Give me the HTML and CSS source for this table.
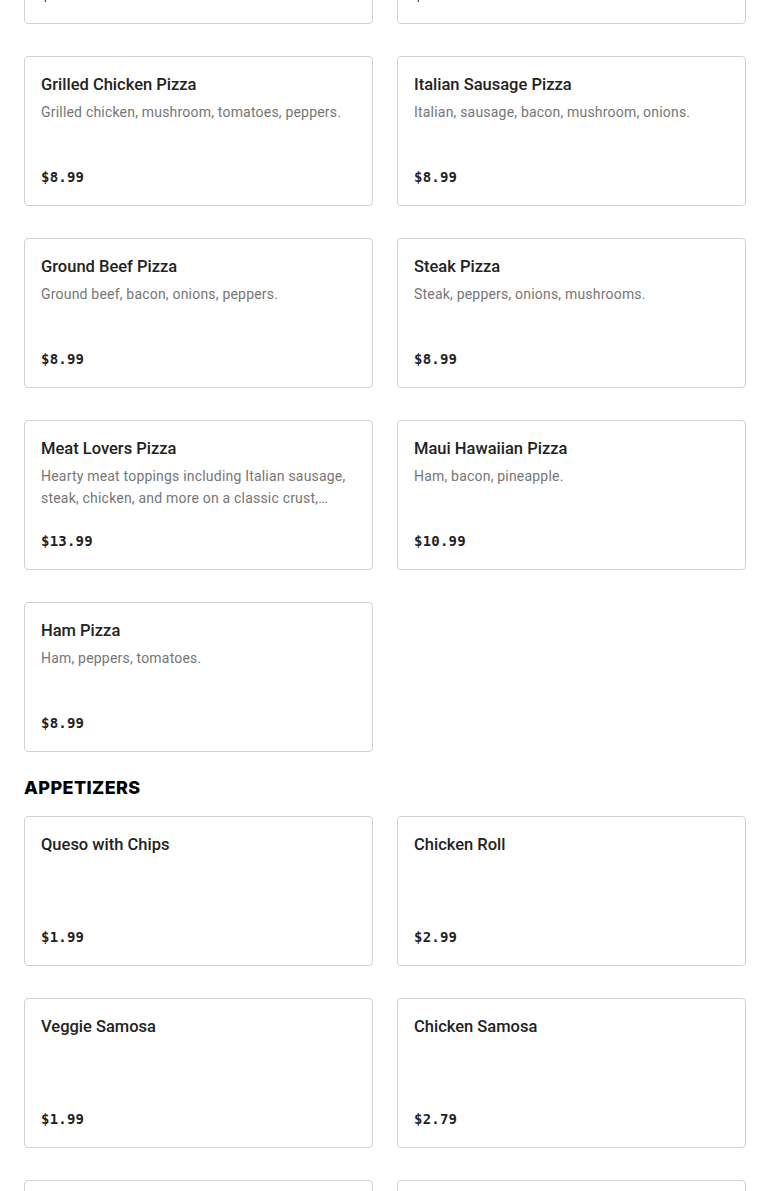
FILE: index.html
```html
<!DOCTYPE html>
<html>
<head>
<meta charset="utf-8">
<link rel="stylesheet" href="styles.css">
</head>
<body>
<main class="menu">
  <section class="section">
    <div class="grid">
      <div class="card"><h3 class="title">Veggie Pizza</h3><p class="desc">Mushroom, onions, peppers, tomatoes.</p><div class="price">$8.99</div></div>
      <div class="card"><h3 class="title">Chicken Pizza</h3><p class="desc">Chicken, onions, peppers.</p><div class="price">$8.99</div></div>
      <div class="card"><h3 class="title">Grilled Chicken Pizza</h3><p class="desc">Grilled chicken, mushroom, tomatoes, peppers.</p><div class="price">$8.99</div></div>
      <div class="card"><h3 class="title">Italian Sausage Pizza</h3><p class="desc">Italian, sausage, bacon, mushroom, onions.</p><div class="price">$8.99</div></div>
      <div class="card"><h3 class="title">Ground Beef Pizza</h3><p class="desc">Ground beef, bacon, onions, peppers.</p><div class="price">$8.99</div></div>
      <div class="card"><h3 class="title">Steak Pizza</h3><p class="desc">Steak, peppers, onions, mushrooms.</p><div class="price">$8.99</div></div>
      <div class="card"><h3 class="title">Meat Lovers Pizza</h3><p class="desc">Hearty meat toppings including Italian sausage, steak, chicken, and more on a classic crust,…</p><div class="price">$13.99</div></div>
      <div class="card"><h3 class="title">Maui Hawaiian Pizza</h3><p class="desc">Ham, bacon, pineapple.</p><div class="price">$10.99</div></div>
      <div class="card"><h3 class="title">Ham Pizza</h3><p class="desc">Ham, peppers, tomatoes.</p><div class="price">$8.99</div></div>
    </div>
  </section>
  <section class="section">
    <h2 class="heading">APPETIZERS</h2>
    <div class="grid">
      <div class="card"><h3 class="title">Queso with Chips</h3><div class="price">$1.99</div></div>
      <div class="card"><h3 class="title">Chicken Roll</h3><div class="price">$2.99</div></div>
      <div class="card"><h3 class="title">Veggie Samosa</h3><div class="price">$1.99</div></div>
      <div class="card"><h3 class="title">Chicken Samosa</h3><div class="price">$2.79</div></div>
      <div class="card"><h3 class="title">French Fries</h3><div class="price">$2.49</div></div>
      <div class="card"><h3 class="title">Onion Rings</h3><div class="price">$2.99</div></div>
    </div>
  </section>
</main>
</body>
</html>
```
FILE: styles.css
```css
* { box-sizing: border-box; }
html, body { margin: 0; padding: 0; background: #fff; }
body { font-family: Roboto, Inter, "Noto Sans", sans-serif; color: #222; }
.menu { padding: 0 24px; margin-top: -126px; }
.grid {
  display: grid;
  grid-template-columns: 1fr 1fr;
  column-gap: 24px;
  row-gap: 32px;
}
.card {
  height: 150px;
  border: 1px solid #d2d2d2;
  border-radius: 4px;
  padding: 16px;
  display: flex;
  flex-direction: column;
}
.title {
  margin: 0;
  font-size: 16.5px;
  line-height: 24px;
  font-weight: 500;
  color: #222;
}
.desc {
  margin: 4px 0 0;
  font-size: 14px;
  line-height: 22px;
  letter-spacing: 0.2px;
  color: #767676;
  display: -webkit-box;
  -webkit-line-clamp: 2;
  -webkit-box-orient: vertical;
  overflow: hidden;
}
.price {
  margin-top: auto;
  font-family: "DejaVu Sans Mono", "Liberation Mono", monospace;
  font-weight: 700;
  font-size: 14px;
  line-height: 24px;
  letter-spacing: 0.2px;
  color: #222;
}
.heading {
  margin: 24px 0 16px;
  font-family: Inter, sans-serif;
  font-size: 18px;
  line-height: 24px;
  font-weight: 800;
  color: #000;
  letter-spacing: 0.4px;
}
```
